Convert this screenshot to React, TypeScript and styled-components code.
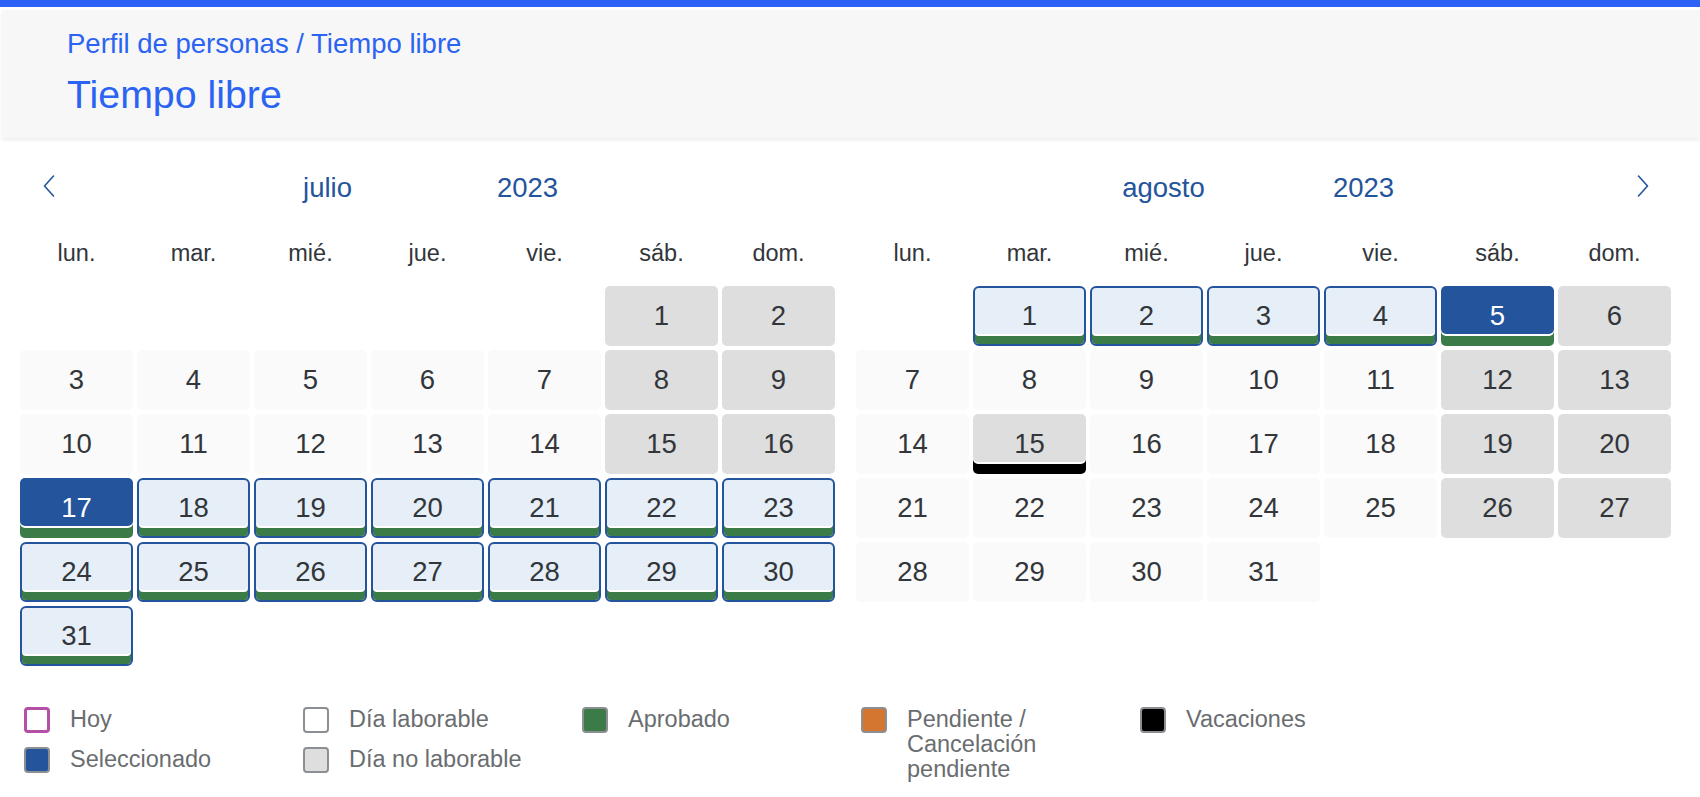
import React from 'react';
import styled, { createGlobalStyle, css } from 'styled-components';

const GlobalStyle = createGlobalStyle`
  html, body { margin: 0; padding: 0; background: #ffffff; }
  body {
    font-family: "Liberation Sans", Arial, sans-serif;
    color: #32363a;
    -webkit-font-smoothing: antialiased;
  }
  * { box-sizing: border-box; }
`;

const TopBar = styled.div`
  height: 7px;
  background: #2b62f5;
`;

const HeaderPanel = styled.header`
  margin: 3px 0 0 2px;
  height: 128px;
  padding: 17.5px 0 0 65px;
  background: #f7f7f7;
  box-shadow: 0 2px 4px rgba(0, 0, 0, 0.08);
`;

const Breadcrumb = styled.div`
  font-size: 27.5px;
  line-height: 32px;
  color: #2b64f2;
`;

const Title = styled.h1`
  margin: 10px 0 0;
  font-size: 39.3px;
  line-height: 48px;
  font-weight: 400;
  color: #2b64f2;
`;

const Calendar = styled.section`
  display: flex;
  gap: 21px;
  padding: 26px 0 0 20px;
`;

const MonthPanel = styled.div`
  width: 815px;
  display: flex;
  flex-direction: column;
`;

const MonthHeader = styled.div`
  display: grid;
  grid-template-columns: 57px 1fr 57px;
  height: 48px;
`;

const NavButton = styled.button`
  border: none;
  background: none;
  padding: 11px 0 0;
  margin: 0;
  display: flex;
  justify-content: center;
  align-items: flex-start;
  cursor: pointer;
  color: #24549b;
`;

const HeaderButtons = styled.div`
  display: flex;
  justify-content: center;
`;

const HeaderButton = styled.button`
  width: 200px;
  border: none;
  background: none;
  padding: 0;
  font-family: inherit;
  font-size: 27.5px;
  line-height: 48px;
  color: #24549b;
  cursor: pointer;
`;

const WeekRow = styled.div`
  margin-top: 17px;
  display: grid;
  grid-template-columns: repeat(7, 113px);
  column-gap: 4px;
`;

const WeekName = styled.div`
  font-size: 23.5px;
  line-height: 48px;
  text-align: center;
  color: #32363a;
`;

const DaysGrid = styled.div`
  margin-top: 9px;
  display: grid;
  grid-template-columns: repeat(7, 113px);
  grid-auto-rows: 60px;
  gap: 4px;
`;

type Kind = 'work' | 'off' | 'range' | 'selected' | 'vacation';

const kindStyles: Record<Kind, ReturnType<typeof css>> = {
  work: css`
    background: #fafafa;
  `,
  off: css`
    background: #dedede;
  `,
  range: css`
    background: #e6eef8;
    border: 2px solid #24549b;
    border-radius: 6px;
    box-shadow: inset 0 -8px 0 #3a7b47, inset 0 -10px 0 #ffffff;
  `,
  selected: css`
    background: #24549b;
    color: #ffffff;
    box-shadow: inset 0 -10px 0 #3a7b47, inset 0 -12px 0 #ffffff;
  `,
  vacation: css`
    background: #dedede;
    box-shadow: inset 0 -10px 0 #000000, inset 0 -12px 0 #ffffff;
  `,
};

const DayCell = styled.div<{ $kind: Kind; $start?: number }>`
  display: flex;
  align-items: center;
  justify-content: center;
  border-radius: 5px;
  font-size: 27.5px;
  color: #32363a;
  ${(p) => kindStyles[p.$kind]}
  ${(p) => (p.$start ? `grid-column-start: ${p.$start};` : '')}
`;

const Legend = styled.div`
  display: flex;
  margin: 41px 0 0 24px;
`;

const LegendColumn = styled.div`
  width: 279px;
  display: flex;
  flex-direction: column;
  gap: 14px;
`;

const LegendItem = styled.div`
  display: flex;
  align-items: flex-start;
  gap: 20px;
`;

const Swatch = styled.span<{ $fill: string; $border?: string; $bw?: number }>`
  flex: none;
  width: 26px;
  height: 26px;
  border-radius: 4px;
  background: ${(p) => p.$fill};
  border: ${(p) => p.$bw ?? 2}px solid ${(p) => p.$border ?? '#8b8f94'};
`;

const LegendLabel = styled.span`
  max-width: 200px;
  font-size: 23.5px;
  line-height: 25px;
  color: #6a6d70;
`;

const Chevron = ({ dir }: { dir: 'left' | 'right' }) => (
  <svg width="12" height="22" viewBox="0 0 12 22" fill="none">
    <polyline
      points={dir === 'left' ? '10.5,1 1.5,11 10.5,21' : '1.5,1 10.5,11 1.5,21'}
      stroke="currentColor"
      strokeWidth="1.6"
      strokeLinejoin="round"
      strokeLinecap="round"
    />
  </svg>
);

const weekNames = ['lun.', 'mar.', 'mié.', 'jue.', 'vie.', 'sáb.', 'dom.'];

type MonthDef = {
  name: string;
  year: string;
  days: number;
  startCol: number;
  kindOf: (d: number, col: number) => Kind;
  prev?: boolean;
  next?: boolean;
};

const months: MonthDef[] = [
  {
    name: 'julio',
    year: '2023',
    days: 31,
    startCol: 6,
    prev: true,
    kindOf: (d, col) => {
      if (d === 17) return 'selected';
      if (d >= 18) return 'range';
      return col >= 6 ? 'off' : 'work';
    },
  },
  {
    name: 'agosto',
    year: '2023',
    days: 31,
    startCol: 2,
    next: true,
    kindOf: (d, col) => {
      if (d === 5) return 'selected';
      if (d <= 4) return 'range';
      if (d === 15) return 'vacation';
      return col >= 6 ? 'off' : 'work';
    },
  },
];

const Month = ({ m }: { m: MonthDef }) => {
  const days = Array.from({ length: m.days }, (_, i) => i + 1);
  return (
    <MonthPanel>
      <MonthHeader>
        {m.prev ? (
          <NavButton aria-label="Anterior">
            <Chevron dir="left" />
          </NavButton>
        ) : (
          <span />
        )}
        <HeaderButtons>
          <HeaderButton>{m.name}</HeaderButton>
          <HeaderButton>{m.year}</HeaderButton>
        </HeaderButtons>
        {m.next ? (
          <NavButton aria-label="Siguiente">
            <Chevron dir="right" />
          </NavButton>
        ) : (
          <span />
        )}
      </MonthHeader>
      <WeekRow>
        {weekNames.map((w) => (
          <WeekName key={w}>{w}</WeekName>
        ))}
      </WeekRow>
      <DaysGrid>
        {days.map((d) => {
          const col = ((m.startCol - 1 + d - 1) % 7) + 1;
          return (
            <DayCell key={d} $kind={m.kindOf(d, col)} $start={d === 1 ? m.startCol : undefined}>
              {d}
            </DayCell>
          );
        })}
      </DaysGrid>
    </MonthPanel>
  );
};

export default function App() {
  return (
    <>
      <GlobalStyle />
      <TopBar />
      <HeaderPanel>
        <Breadcrumb>Perfil de personas / Tiempo libre</Breadcrumb>
        <Title>Tiempo libre</Title>
      </HeaderPanel>
      <Calendar>
        {months.map((m) => (
          <Month key={m.name} m={m} />
        ))}
      </Calendar>
      <Legend>
        <LegendColumn>
          <LegendItem>
            <Swatch $fill="#ffffff" $border="#b64fa6" $bw={3} />
            <LegendLabel>Hoy</LegendLabel>
          </LegendItem>
          <LegendItem>
            <Swatch $fill="#24549b" />
            <LegendLabel>Seleccionado</LegendLabel>
          </LegendItem>
        </LegendColumn>
        <LegendColumn>
          <LegendItem>
            <Swatch $fill="#ffffff" />
            <LegendLabel>Día laborable</LegendLabel>
          </LegendItem>
          <LegendItem>
            <Swatch $fill="#dedede" />
            <LegendLabel>Día no laborable</LegendLabel>
          </LegendItem>
        </LegendColumn>
        <LegendColumn>
          <LegendItem>
            <Swatch $fill="#3a7b47" />
            <LegendLabel>Aprobado</LegendLabel>
          </LegendItem>
        </LegendColumn>
        <LegendColumn>
          <LegendItem>
            <Swatch $fill="#d47630" />
            <LegendLabel>Pendiente / Cancelación pendiente</LegendLabel>
          </LegendItem>
        </LegendColumn>
        <LegendColumn>
          <LegendItem>
            <Swatch $fill="#000000" />
            <LegendLabel>Vacaciones</LegendLabel>
          </LegendItem>
        </LegendColumn>
      </Legend>
    </>
  );
}
